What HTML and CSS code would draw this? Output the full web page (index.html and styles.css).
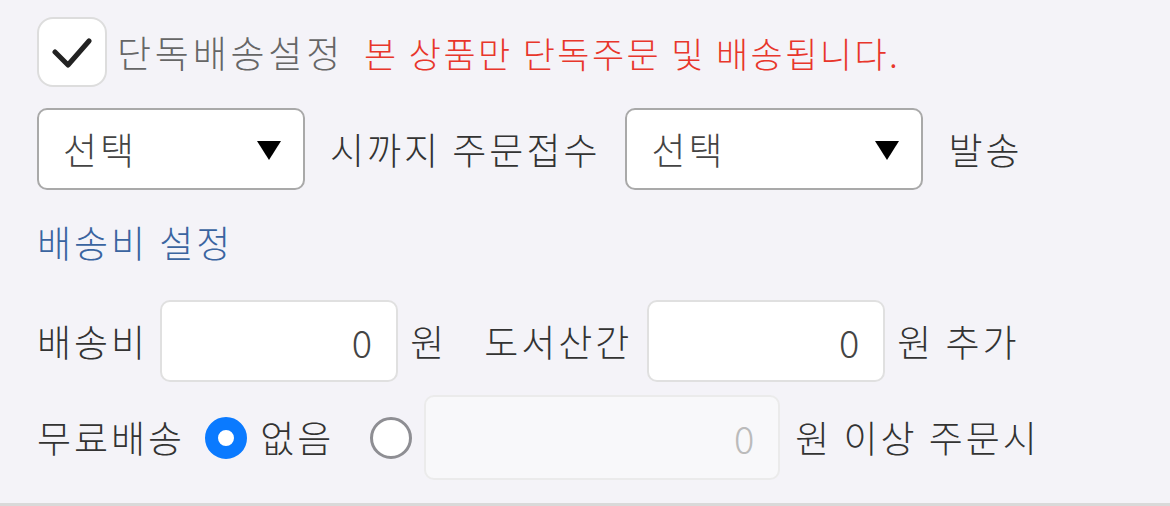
FILE: index.html
```html
<!DOCTYPE html>
<html>
<head>
  <meta charset="UTF-8">
  <link rel="stylesheet" href="styles.css">
</head>
<body>
  <div class="panel">
    <div class="row row-single">
      <span class="check-box">
        <svg width="40" height="32" viewBox="0 0 40 32">
          <path d="M3 15 L16 28 L37 4" fill="none" stroke="#222" stroke-width="5" stroke-linecap="round" stroke-linejoin="round"/>
        </svg>
      </span>
      <span class="label label-muted single-label">단독배송설정</span>
      <span class="notice">본 상품만 단독주문 및 배송됩니다.</span>
    </div>

    <div class="row row-select">
      <div class="select select-first">
        <span>선택</span>
        <span class="caret"></span>
      </div>
      <span class="label gap-25">시까지 주문접수</span>
      <div class="select select-second gap-25">
        <span>선택</span>
        <span class="caret"></span>
      </div>
      <span class="label gap-25">발송</span>
    </div>

    <div class="row row-title">
      <span class="section-title">배송비 설정</span>
    </div>

    <div class="row row-fee">
      <span class="label">배송비</span>
      <div class="field field-fee">0</div>
      <span class="label unit">원</span>
      <span class="label remote-label">도서산간</span>
      <div class="field field-remote">0</div>
      <span class="label unit">원 추가</span>
    </div>

    <div class="row row-free">
      <span class="label">무료배송</span>
      <span class="radio radio-on"></span>
      <span class="label radio-text">없음</span>
      <span class="radio radio-off"></span>
      <div class="field field-disabled">0</div>
      <span class="label unit-wide">원 이상 주문시</span>
    </div>
  </div>
</body>
</html>
```

FILE: styles.css
```css
body {
  margin: 0;
  width: 1170px;
  height: 506px;
  font-family: "Noto Sans CJK KR", "Noto Sans", sans-serif;
  font-weight: 300;
  background: #f4f3f8;
  color: #333333;
  overflow: hidden;
}

.panel {
  height: 506px;
  box-sizing: border-box;
  padding: 17px 0 0 37px;
  border-bottom: 3px solid #d9d9d9;
}

.row {
  display: flex;
  align-items: center;
}

.label {
  font-size: 37px;
  letter-spacing: 3px;
  line-height: 1;
  white-space: nowrap;
  color: #333333;
}

.label-muted {
  color: #666666;
}

/* row 1 */
.row-single {
  height: 70px;
}

.check-box {
  width: 70px;
  height: 70px;
  box-sizing: border-box;
  border: 2px solid #dddddd;
  border-radius: 16px;
  background: #ffffff;
  display: flex;
  align-items: center;
  justify-content: center;
}

.check-box svg {
  margin-top: 2px;
}

.single-label {
  margin-left: 10px;
  letter-spacing: 3.8px;
}

.notice {
  margin-left: 20px;
  font-size: 35px;
  letter-spacing: 2.4px;
  line-height: 1;
  color: #e8362b;
  white-space: nowrap;
}

/* row 2 */
.row-select {
  height: 82px;
  margin-top: 21px;
}

.select {
  height: 82px;
  box-sizing: border-box;
  border: 2px solid #a9a9a9;
  border-radius: 10px;
  background: #ffffff;
  padding: 0 22px 0 24px;
  display: flex;
  align-items: center;
  justify-content: space-between;
  font-size: 37px;
  letter-spacing: 3px;
  color: #444444;
}

.select-first {
  width: 268px;
}

.select-second {
  width: 298px;
}

.caret {
  width: 0;
  height: 0;
  border-left: 12px solid transparent;
  border-right: 12px solid transparent;
  border-top: 19px solid #000000;
  margin-top: 2px;
}

.gap-25 {
  margin-left: 25px;
}

/* row 3 */
.row-title {
  height: 50px;
  margin-top: 27px;
}

.section-title {
  font-size: 37px;
  letter-spacing: 3px;
  line-height: 1;
  color: #3a64a0;
}

/* row 4 */
.row-fee {
  height: 82px;
  margin-top: 33px;
}

.field {
  height: 82px;
  box-sizing: border-box;
  border: 2px solid #e0e0e0;
  border-radius: 10px;
  background: #ffffff;
  padding-right: 24px;
  display: flex;
  align-items: center;
  justify-content: flex-end;
  font-size: 38px;
  color: #444444;
}

.field-fee {
  width: 238px;
  margin-left: 12px;
}

.field-remote {
  width: 238px;
  margin-left: 15px;
}

.unit {
  margin-left: 12px;
}

.unit-add {
  letter-spacing: 4px;
}

.remote-label {
  margin-left: 37px;
}

/* row 5 */
.row-free {
  height: 85px;
  margin-top: 13px;
}

.radio {
  width: 42px;
  height: 42px;
  box-sizing: border-box;
  border-radius: 50%;
  background: #ffffff;
}

.radio-on {
  margin-left: 20px;
  border: 13px solid #0a7aff;
}

.radio-off {
  margin-left: 36px;
  border: 3px solid #8e8e93;
}

.radio-text {
  margin-left: 13px;
}

.field-disabled {
  width: 356px;
  height: 85px;
  margin-left: 12px;
  background: #f8f8fa;
  border-color: #ebebeb;
  color: #bbbbbb;
}

.unit-wide {
  margin-left: 15px;
}
```
